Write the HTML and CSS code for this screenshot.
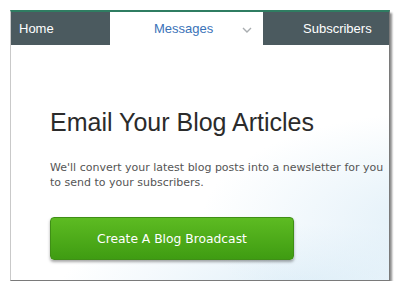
FILE: index.html
```html
<!DOCTYPE html>
<html lang="en">
<head>
  <meta charset="UTF-8">
  <title>Email Your Blog Articles</title>
  <link rel="stylesheet" href="styles.css">
</head>
<body>

  <!-- Panel -->
  <div class="panel">
    <nav class="tabs">
      <div class="tab tab-home">Home</div>
      <div class="tab tab-active">
        <span>Messages</span>
        <svg class="chevron" width="10" height="6" viewBox="0 0 10 6">
          <path d="M1 1 L5 5 L9 1" fill="none" stroke="#a9adb0" stroke-width="1.4"/>
        </svg>
      </div>
      <div class="tab tab-subs">Subscribers</div>
    </nav>

    <div class="content">
      <h1>Email Your Blog Articles</h1>
      <p>We'll convert your latest blog posts into a newsletter for you to send to your subscribers.</p>
      <button class="btn">Create A Blog Broadcast</button>
    </div>
  </div>

</body>
</html>
```

FILE: styles.css
```css
* {
  margin: 0;
  padding: 0;
  box-sizing: border-box;
}

body {
  background-color: #ffffff;
  font-family: "Liberation Sans", Arial, sans-serif;
  padding: 10px 0 0 10px;
}

.panel {
  width: 380px;
  height: 271px;
  border-top: 2px solid #2f7d62;
  border-left: 1px solid #c9c9c9;
  border-right: 1px solid #7a7a7a;
  border-bottom: 1px solid #7a7a7a;
  box-shadow: 2px 3px 2px rgba(0, 0, 0, 0.45);
  background:
    radial-gradient(ellipse 240px 110px at 430px 210px, rgba(214, 234, 246, 0.75), rgba(255, 255, 255, 0) 100%),
    radial-gradient(ellipse 240px 60px at 290px 272px, rgba(218, 236, 247, 0.8), rgba(255, 255, 255, 0) 100%),
    #ffffff;
  display: flex;
  flex-direction: column;
}

.tabs {
  display: flex;
  height: 33px;
}

.tab {
  display: flex;
  align-items: center;
  font-size: 13px;
  color: #ffffff;
  background-color: #4b5a5f;
}

.tab-home {
  width: 99px;
  padding-left: 8px;
}

.tab-active {
  width: 153px;
  background-color: #ffffff;
  color: #3a72b8;
  padding-left: 44px;
}

.chevron {
  margin-left: 29px;
  margin-top: 2px;
}

.tab-subs {
  flex: 1;
  padding-left: 40px;
}

.content {
  padding: 62px 0 0 39px;
}

h1 {
  font-size: 25px;
  font-weight: normal;
  color: #2b2b2b;
  line-height: 30px;
}

p {
  margin-top: 23px;
  font-family: "DejaVu Sans", Verdana, sans-serif;
  font-size: 11px;
  line-height: 15px;
  color: #555555;
  width: 340px;
}

.btn {
  margin-top: 27px;
  width: 244px;
  height: 43px;
  border: 1px solid #3f8f16;
  border-radius: 4px;
  background: linear-gradient(#5dbb22, #3f9c12);
  box-shadow: 0 2px 3px rgba(0, 0, 0, 0.35);
  color: #ffffff;
  font-family: "DejaVu Sans", Verdana, sans-serif;
  font-size: 12.3px;
  cursor: pointer;
}
```
